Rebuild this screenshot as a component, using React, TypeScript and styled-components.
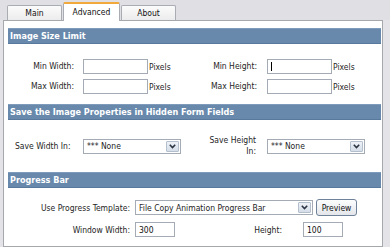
import React from 'react';
import styled, { createGlobalStyle, css } from 'styled-components';

const GlobalStyle = createGlobalStyle`
  html, body {
    margin: 0;
    padding: 0;
    background: #e4e4e8;
  }
  body {
    font-family: "DejaVu Sans Condensed", "DejaVu Sans", sans-serif;
    font-size: 8.5px;
    color: #1e1e1e;
  }
  * { box-sizing: border-box; }
`

export default function App(): JSX.Element {
  return (
    <Page>
      <GlobalStyle />
      <TabStrip>
        <Tab $w={55}>Main</Tab>
        <Tab $w={57} $active>Advanced</Tab>
        <Tab $w={55}>About</Tab>
      </TabStrip>
      <Panel>
        <SectionHeader>Image Size Limit</SectionHeader>
        <SizeGrid>
          <Label $pr={9}>Min Width:</Label>
          <TextInput $w={65} />
          <Unit>Pixels</Unit>
          <Label $pr={10}>Min Height:</Label>
          <InputWrap>
            <TextInput $w={65} $focused />
          </InputWrap>
          <Unit>Pixels</Unit>

          <Label $pr={9}>Max Width:</Label>
          <TextInput $w={65} />
          <Unit>Pixels</Unit>
          <Label $pr={10}>Max Height:</Label>
          <TextInput $w={65} />
          <Unit>Pixels</Unit>
        </SizeGrid>

        <SectionHeader>Save the Image Properties in Hidden Form Fields</SectionHeader>
        <HiddenGrid>
          <Label $left $pl={7}>Save Width In:</Label>
          <Select $w={98}>*** None</Select>
          <Label $pr={11}>Save Height<br />In:</Label>
          <Select $w={98}>*** None</Select>
        </HiddenGrid>

        <SectionHeader>Progress Bar</SectionHeader>
        <ProgressBody>
          <Row>
            <RowLabel $w={127}>Use Progress Template:</RowLabel>
            <Select $w={178}>File Copy Animation Progress Bar</Select>
            <Button>Preview</Button>
          </Row>
          <Row>
            <RowLabel $w={127}>Window Width:</RowLabel>
            <TextInput $w={40} defaultValue="300" />
            <RowLabel $w={128} $pr={21}>Height:</RowLabel>
            <TextInput $w={40} defaultValue="100" />
          </Row>
        </ProgressBody>
      </Panel>
    </Page>
  );
}

function Select({ $w, children }: { $w: number; children: React.ReactNode }): JSX.Element {
  return (
    <SelectBox $w={$w}>
      <SelectText>{children}</SelectText>
      <ArrowBtn>
        <svg width="7" height="5" viewBox="0 0 7 5">
          <path d="M0.8 0.8 L3.5 3.6 L6.2 0.8" fill="none" stroke="#2a3442" strokeWidth="1.6" />
        </svg>
      </ArrowBtn>
    </SelectBox>
  );
}


const Page = styled.div`
  width: 390px;
  height: 247px;
  overflow: hidden;
`

const TabStrip = styled.div`
  display: flex;
  align-items: flex-end;
  gap: 1px;
  height: 20px;
  padding-left: 7px;
  background: #dfdfe4;
`

const Tab = styled.div<{ $w: number; $active?: boolean }>`
  width: ${p => p.$w}px;
  height: 15px;
  display: flex;
  align-items: center;
  justify-content: center;
  background: linear-gradient(#fbfbfb, #ececec);
  border: 1px solid #a9adb3;
  border-bottom: none;
  border-radius: 2px 2px 0 0;
  font-size: 8.5px;
  color: #111;

  ${p => p.$active && css`
    position: relative;
    height: 19px;
    margin-bottom: -1px;
    background: #ffffff;
    border-top: 2px solid #f2a93b;
    z-index: 1;
    padding-bottom: 1px;
  `}
`

const Panel = styled.div`
  margin-left: 3px;
  width: 380px;
  height: 227px;
  background: #ffffff;
  border: 1px solid #a5a9ae;
  padding: 7px 1px 0 4px;
`

const SectionHeader = styled.div`
  height: 16px;
  line-height: 15px;
  padding-left: 2px;
  background: #6889ac;
  border-top: 1px solid #7f9bbb;
  border-bottom: 1px solid #58799b;
  color: #ffffff;
  font-weight: bold;
  font-size: 9px;
  white-space: nowrap;
  overflow: hidden;
`

const SizeGrid = styled.div`
  display: grid;
  grid-template-columns: 75px 65px 37px 82px 65px 1fr;
  grid-auto-rows: 15px;
  row-gap: 5px;
  align-items: center;
  padding: 15px 0 10px;
`

const HiddenGrid = styled.div`
  display: grid;
  grid-template-columns: 75px 98px 86px 98px;
  grid-auto-rows: 22px;
  align-items: center;
  padding: 15px 0 15px;
`

const Label = styled.div<{ $left?: boolean; $pr?: number; $pl?: number }>`
  text-align: ${p => (p.$left ? 'left' : 'right')};
  padding-right: ${p => p.$pr ?? 0}px;
  padding-left: ${p => p.$pl ?? 0}px;
  line-height: 11px;
  white-space: nowrap;
`

const Unit = styled.div`
  padding-left: 1px;
`

const InputWrap = styled.div`
  position: relative;
  height: 15px;

  &::after {
    content: '';
    position: absolute;
    left: 4px;
    top: 3px;
    width: 1px;
    height: 9px;
    background: #000;
  }
`

const TextInput = styled.input<{ $w: number; $focused?: boolean }>`
  display: block;
  width: ${p => p.$w}px;
  height: 15px;
  margin: 0;
  padding: 0 3px;
  border: 1px solid #a4abb4;
  background: #fff;
  font-family: inherit;
  font-size: 8.5px;
  color: #111;
  outline: none;
`

const SelectBox = styled.div<{ $w: number }>`
  display: flex;
  align-items: center;
  width: ${p => p.$w}px;
  height: 15px;
  border: 1px solid #a4abb4;
  background: #fff;
  padding: 0 1px 0 3px;
`

const SelectText = styled.span`
  flex: 1;
  white-space: nowrap;
  overflow: hidden;
`

const ArrowBtn = styled.span`
  width: 13px;
  height: 11px;
  display: flex;
  align-items: center;
  justify-content: center;
  background: linear-gradient(#eef2f7, #d5dde8);
  border: 1px solid #b3bfcd;
  border-radius: 1px;
`

const ProgressBody = styled.div`
  display: flex;
  flex-direction: column;
  gap: 6px;
  padding-top: 11px;
`

const Row = styled.div`
  display: flex;
  align-items: center;
`

const RowLabel = styled.div<{ $w: number; $pr?: number }>`
  width: ${p => p.$w}px;
  text-align: right;
  padding-right: ${p => p.$pr ?? 5}px;
  white-space: nowrap;
`

const Button = styled.button`
  margin-left: 3px;
  width: 41px;
  height: 17px;
  padding: 0;
  border: 1px solid #6f829a;
  border-radius: 3px;
  background: linear-gradient(#fdfdfd, #e3e6ea);
  font-family: inherit;
  font-size: 8.5px;
  color: #111;
`
